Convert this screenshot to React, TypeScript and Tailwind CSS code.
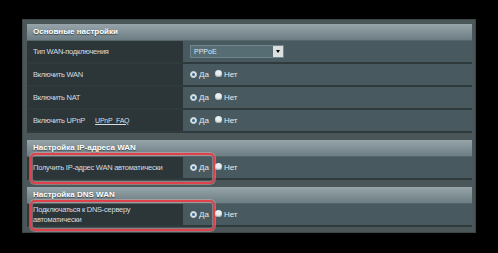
import React from 'react';

type Row = { label: React.ReactNode; value: 'select' | 'radio' };

const font = { fontFamily: '"Liberation Sans", Arial, sans-serif' };

function Radio({ checked }: { checked: boolean }) {
  return checked ? (
    <span className="inline-flex h-[7px] w-[7px] items-center justify-center rounded-full border border-[#c9d3d6] bg-[#dfe6e8]">
      <span className="h-[3px] w-[3px] rounded-full bg-[#3d6a8a]" />
    </span>
  ) : (
    <span className="inline-block h-[7px] w-[7px] rounded-full bg-[#e9eeef] shadow-[inset_0_-1px_1px_#9aa5a8]" />
  );
}

function YesNo() {
  return (
    <div className="flex items-center text-[8px] text-[#e4eaeb]">
      <Radio checked />
      <span className="ml-[2px]">Да</span>
      <span className="ml-[6px]">
        <Radio checked={false} />
      </span>
      <span className="ml-[2px]">Нет</span>
    </div>
  );
}

function Select() {
  return (
    <div className="flex h-[13px] w-[94px] items-center border border-[#6f868c] bg-[#566d73]">
      <span className="flex-1 pl-[3px] text-[7px] leading-none text-[#dbe6ff]">PPPoE</span>
      <span className="flex h-[11px] w-[10px] items-center justify-center bg-[#dcdfdf]">
        <span className="h-0 w-0 border-x-[2.5px] border-t-[3px] border-x-transparent border-t-black" />
      </span>
    </div>
  );
}

function Section({ title, rows, highlight }: { title: string; rows: Row[]; highlight?: boolean }) {
  return (
    <div className="flex flex-col">
      <div className="flex h-[17px] items-center border-b border-[#55666b] bg-gradient-to-b from-[#97a5aa] to-[#6c7d83] pl-[6px] text-[8px] font-bold text-white [text-shadow:0_1px_1px_#3a4548]">
        {title}
      </div>
      {rows.map((row, i) => (
        <div key={i} className="relative flex h-[23px] border-b-2 border-[#2f3a3d]">
          <div className="flex w-[156px] items-center bg-[#2c3538] pl-[6px] text-[7.5px] leading-[10px] tracking-[-0.25px] text-[#d6dde0]">
            {row.label}
          </div>
          <div className="flex flex-1 items-center bg-[#485a5f] pl-[7px]">
            {row.value === 'select' ? <Select /> : <YesNo />}
          </div>
          {highlight && (
            <div className="pointer-events-none absolute left-[3px] top-[-4px] h-[31px] w-[185px] rounded-[5px] border-2 border-[#e0424c] shadow-[0_0_0_1px_rgba(255,200,200,0.35),inset_0_0_0_1px_rgba(255,200,200,0.35)]" />
          )}
        </div>
      ))}
    </div>
  );
}

export default function App() {
  return (
    <div className="h-[253px] w-[498px] overflow-hidden bg-black pl-[22px] pt-[19px]" style={font}>
      <div className="flex h-[214px] w-[454px] flex-col gap-[7px] border border-[#3c4548] bg-[#4b5659] pb-[5px] pl-[4px] pr-[3px] pt-[4px]">
        <Section
          title="Основные настройки"
          rows={[
            { label: 'Тип WAN-подключения', value: 'select' },
            { label: 'Включить WAN', value: 'radio' },
            { label: 'Включить NAT', value: 'radio' },
            {
              label: (
                <>
                  Включить UPnP
                  <span className="ml-[10px] text-[7px] underline">UPnP_FAQ</span>
                </>
              ),
              value: 'radio',
            },
          ]}
        />
        <Section
          title="Настройка IP-адреса WAN"
          highlight
          rows={[{ label: 'Получить IP-адрес WAN автоматически', value: 'radio' }]}
        />
        <Section
          title="Настройка DNS WAN"
          highlight
          rows={[
            {
              label: (
                <span>
                  Подключаться к DNS-серверу
                  <br />
                  автоматически
                </span>
              ),
              value: 'radio',
            },
          ]}
        />
      </div>
    </div>
  );
}
